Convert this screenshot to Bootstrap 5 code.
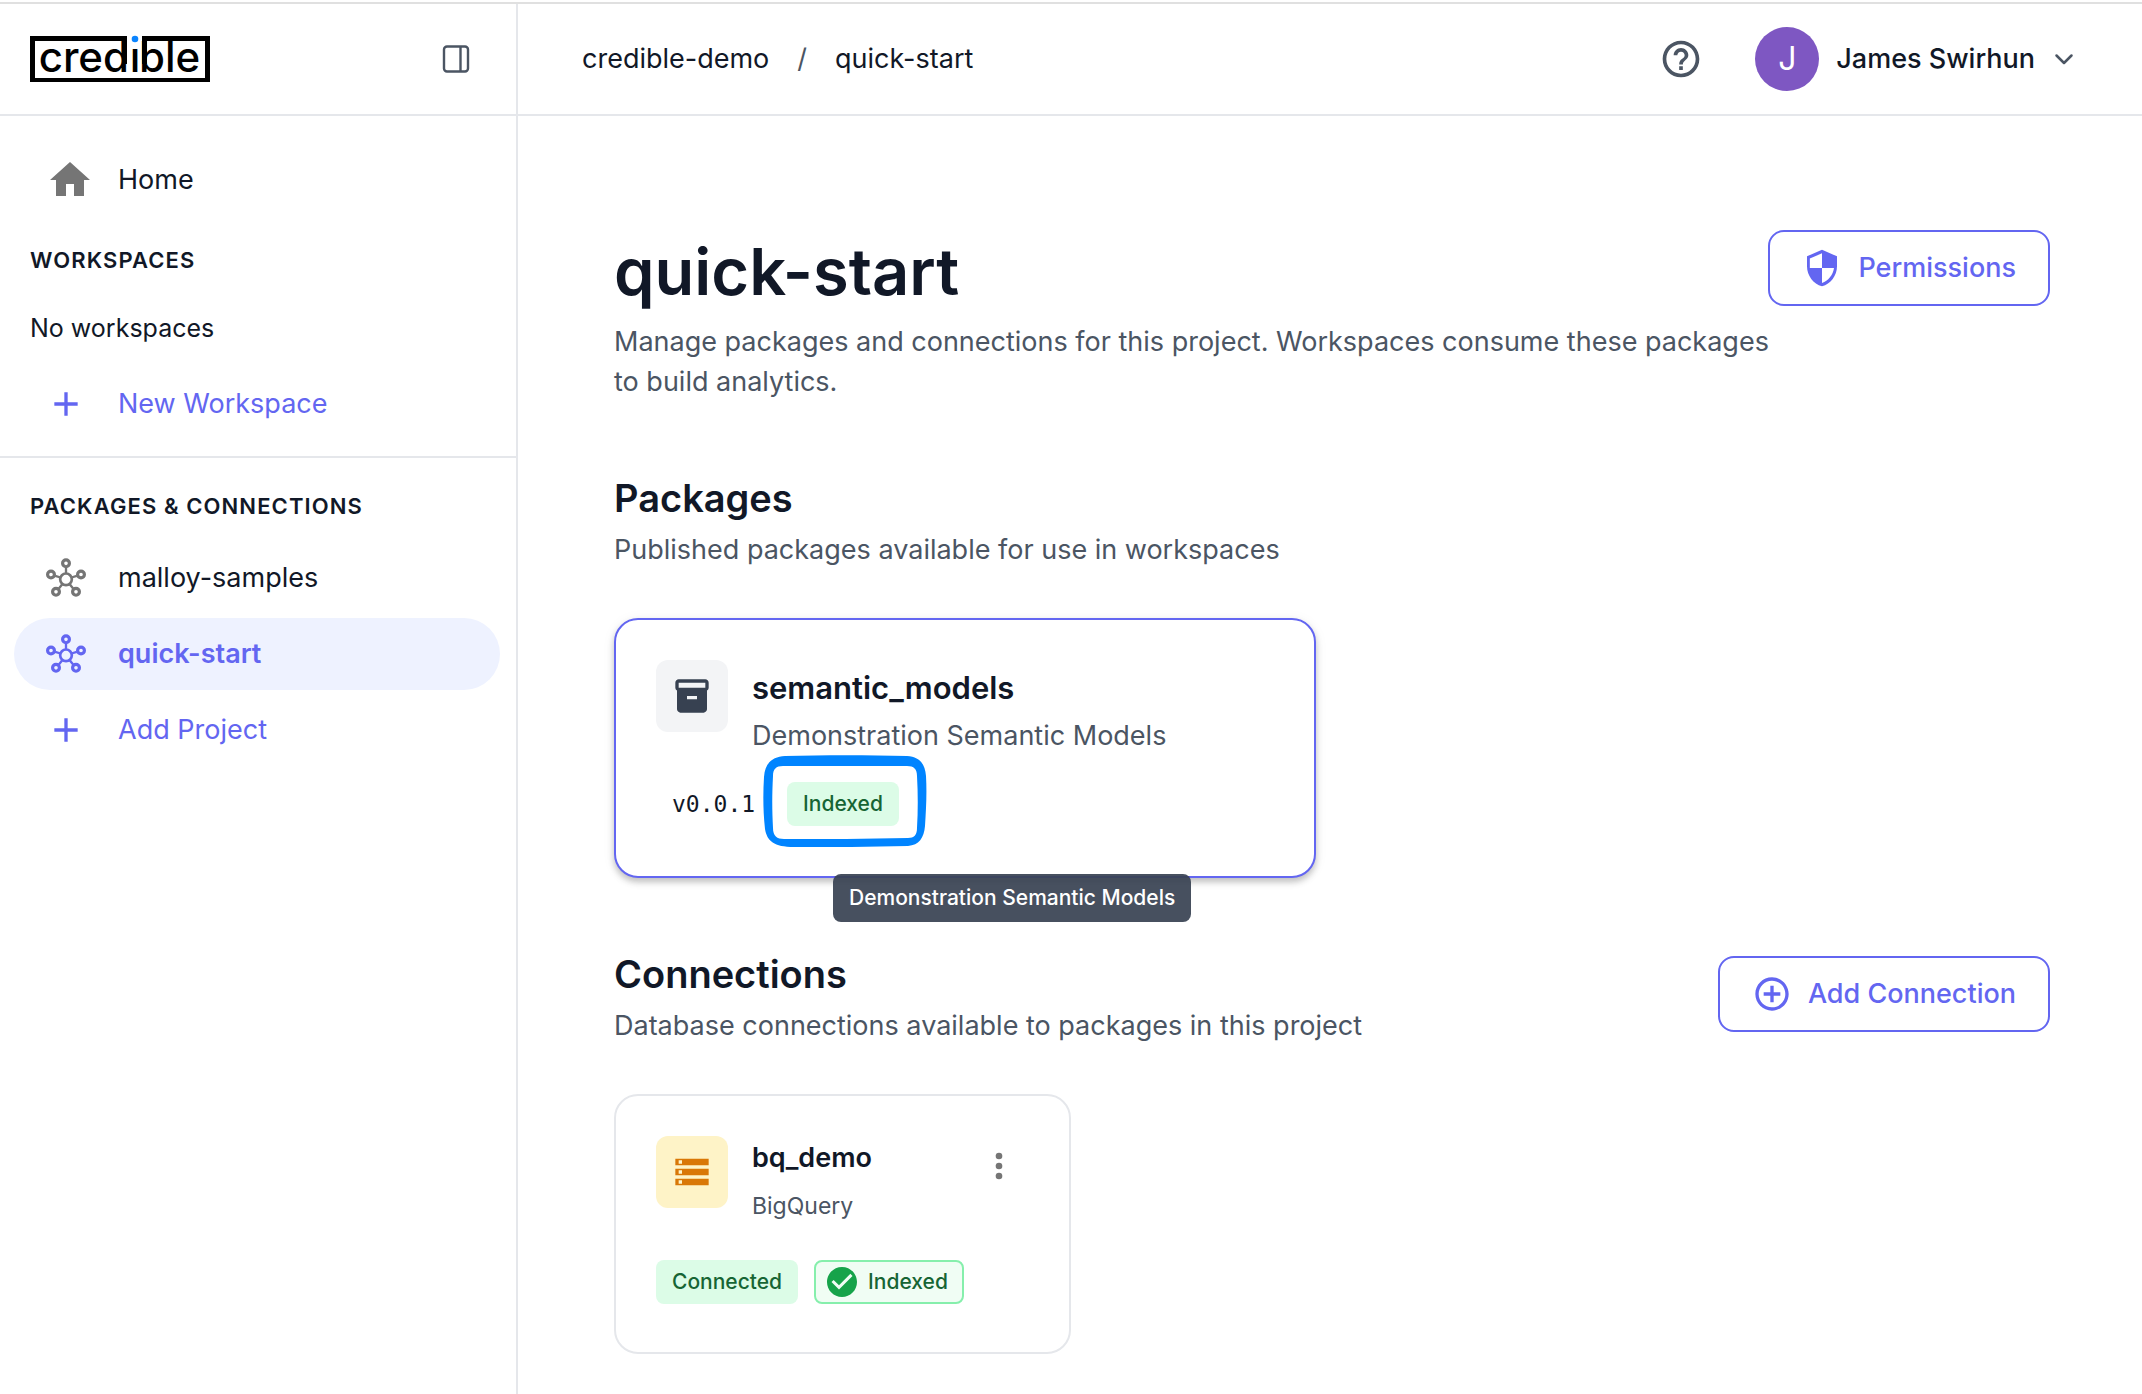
<!DOCTYPE html>
<html lang="en">
<head>
<meta charset="utf-8">
<meta name="viewport" content="width=device-width, initial-scale=1">
<title>quick-start</title>
<link href="https://cdn.jsdelivr.net/npm/bootstrap@5.3.0/dist/css/bootstrap.min.css" rel="stylesheet">
<style>
:root { --ink:#111827; --soft:#4b5563; --brand:#6366f1; --line:#e5e7eb; }
body { font-family: Inter, "Liberation Sans", sans-serif; font-size:27px; line-height:40px; color:var(--ink); background:#fff; }
svg { flex:none; display:block; }
.app-shell { min-height:100vh; padding-top:2px; }
.app-frame { border-top:2px solid #e0e0e0; }
.top-bar { height:112px; border-bottom:2px solid var(--line); }
.side-panel { width:518px; border-right:2px solid var(--line); }
.side-head { padding:0 44px 0 30px; }
.side-nav { padding-top:28px; }
.plain-btn { background:none; border:0; padding:0; color:var(--soft); }
.nav-row { display:flex; align-items:center; height:72px; margin:0 16px 4px 14px; padding-left:32px; gap:32px; border-radius:36px; color:var(--ink); text-decoration:none; }
.nav-row svg { color:#757575; }
.nav-row.home-row { gap:24px; margin-bottom:0; }
.nav-row.accent, .nav-row.accent svg, .nav-row.current, .nav-row.current svg { color:var(--brand); }
.nav-row.current { background:#eef2ff; font-weight:600; }
.side-label { font-size:22px; line-height:32px; font-weight:600; letter-spacing:.05em; margin:0; padding:28px 30px 20px; }
.side-empty { font-size:25px; line-height:64px; margin:0 0 8px; padding:0 30px; }
.side-rule { border-top:2px solid var(--line); margin-top:16px; padding-top:4px; }
.crumb-list { padding-left:64px; gap:28px; }
.crumb-list a { color:inherit; text-decoration:none; }
.crumb-list .slash { color:var(--soft); }
.top-tools { padding-right:66px; gap:52px; }
.avatar-disc { width:64px; height:64px; border-radius:50%; background:#7e57c2; color:#fff; font-size:32px; }
.user-btn { gap:17px; color:var(--ink); font-weight:500; }
.page-body { padding:114px 92px 40px 96px; }
.page-title { font-size:65px; line-height:84px; font-weight:600; margin:0 0 8px; }
.muted-text { color:var(--soft); margin:0; }
.intro-text { max-width:82%; }
.page-section { margin-top:72px; }
.section-title { font-size:38px; line-height:48px; font-weight:600; margin:0 0 8px; }
.btn-line { --bs-btn-color:var(--brand); --bs-btn-border-color:var(--brand); --bs-btn-hover-color:#fff; --bs-btn-hover-bg:var(--brand); --bs-btn-font-size:27px; --bs-btn-line-height:40px; --bs-btn-border-width:2px; --bs-btn-border-radius:16px; --bs-btn-padding-x:32px; --bs-btn-padding-y:16px; --bs-btn-font-weight:500; display:flex; align-items:center; gap:16px; flex:none; }
.low-btn { margin-top:6px; }
.tile-row { --bs-gutter-x:32px; margin-top:48px; }
.tile { --bs-card-border-color:var(--line); --bs-card-border-width:2px; --bs-card-border-radius:24px; --bs-card-color:var(--ink); min-height:260px; padding:40px; }
.tile.hovered { --bs-card-border-color:var(--brand); box-shadow:0 4px 6px rgba(0,0,0,.22), 0 2px 14px rgba(0,0,0,.06); }
.tile-head { gap:24px; height:92px; }
.glyph-box { width:72px; height:72px; border-radius:12px; flex:none; }
.glyph-gray { background:#f3f4f6; color:#374151; }
.glyph-amber { background:#fef3c7; color:#d97706; }
.tile-name { font-size:27px; line-height:40px; font-weight:600; margin:2px 0 8px; }
.tile-name.larger { font-size:31px; margin:8px 0; }
.tile-kind { font-size:23px; }
.chip-row { gap:16px; margin-top:32px; }
.hovered .chip-row { margin-top:30px; }
.chip { display:flex; align-items:center; height:44px; padding:0 16px; border-radius:8px; font-size:21px; line-height:32px; font-weight:500; }
.chip-green { background:#dcfce7; color:#166534; }
.chip-outline { background:#f0fdf4; color:#166534; border:2px solid #86efac; padding:0 14px 0 8px; gap:8px; }
.chip-mono { font-family:"DejaVu Sans Mono", "Liberation Mono", monospace; font-size:23px; font-weight:400; }
.ring-mark { position:absolute; left:-24px; top:-27px; }
.tip-box { position:absolute; left:217px; top:254px; z-index:2; background:rgba(55,65,81,.92); color:#fff; border-radius:8px; padding:8px 16px; font-size:21px; line-height:32px; font-weight:500; white-space:nowrap; }
.dots-btn { color:#757575; margin:10px 10px 0 auto; align-self:flex-start; }
</style>
</head>
<body>
<svg width="0" height="0" class="position-absolute" aria-hidden="true">
  <symbol id="hub" viewBox="0 0 24 24"><g fill="none" stroke="currentColor" stroke-width="1.900"><circle cx="12" cy="12.800" r="3.500" stroke-width="1.600"/><circle cx="12" cy="3.200" r="2.050"/><circle cx="3" cy="9.900" r="2.050"/><circle cx="21" cy="9.900" r="2.050"/><circle cx="6" cy="20.300" r="2.050"/><circle cx="18" cy="20.300" r="2.050"/><path stroke-width="1.400" d="M12 6v3.300M5.500 10.700l3.300 1M18.500 10.700l-3.300 1M7.600 18.500l2.300-2.900M16.400 18.500l-2.300-2.900"/></g></symbol>
  <symbol id="plus" viewBox="0 0 24 24"><path fill="currentColor" d="M19 13h-6v6h-2v-6H5v-2h6V5h2v6h6v2z"/></symbol>
</svg>

<div class="app-shell d-flex">
<div class="app-frame d-flex flex-grow-1">
  <aside class="side-panel flex-shrink-0">
    <div class="top-bar side-head d-flex align-items-center justify-content-between">
      <a href="#" aria-label="credible">
        <svg width="180" height="66" viewBox="0 -10 180 66">
          <path d="M97 28V0H0v46h180V0H112v28h5V5h58v37H5V5h87v23z" fill="#000"/>
          <g font-family="Inter, sans-serif" font-size="42" font-weight="500" fill="#000">
            <text x="99" y="36" text-anchor="end">cred</text>
            <text x="105" y="36" text-anchor="middle">ı</text>
            <text x="109" y="36">ble</text>
          </g>
          <circle cx="105" cy="3" r="3.300" fill="#0a84ff"/>
        </svg>
      </a>
      <button type="button" class="plain-btn" aria-label="Toggle sidebar">
        <svg width="32" height="32" viewBox="0 0 32 32" fill="none" stroke="currentColor" stroke-width="2.400"><rect x="4" y="3.500" width="24" height="25" rx="3"/><path d="M20.500 3v26"/></svg>
      </button>
    </div>
    <nav class="side-nav">
      <a class="nav-row home-row" href="#"><svg width="48" height="48" viewBox="0 0 24 24"><path fill="currentColor" d="M10 20v-6h4v6h5v-8h3L12 3 2 12h3v8z"/></svg>Home</a>
      <h2 class="side-label">WORKSPACES</h2>
      <p class="side-empty">No workspaces</p>
      <a class="nav-row accent" href="#"><svg width="40" height="40"><use href="#plus"/></svg>New Workspace</a>
      <div class="side-rule">
        <h2 class="side-label">PACKAGES &amp; CONNECTIONS</h2>
        <a class="nav-row" href="#"><svg width="40" height="40"><use href="#hub"/></svg>malloy-samples</a>
        <a class="nav-row current" href="#" aria-current="page"><svg width="40" height="40"><use href="#hub"/></svg>quick-start</a>
        <a class="nav-row accent" href="#"><svg width="40" height="40"><use href="#plus"/></svg>Add Project</a>
      </div>
    </nav>
  </aside>

  <div class="flex-grow-1">
    <header class="top-bar d-flex align-items-center justify-content-between">
      <nav class="crumb-list d-flex" aria-label="Breadcrumb">
        <a href="#">credible-demo</a><span class="slash">/</span><a href="#">quick-start</a>
      </nav>
      <div class="top-tools d-flex align-items-center">
        <button type="button" class="plain-btn" aria-label="Help">
          <svg width="44" height="44" viewBox="0 0 24 24"><path fill="currentColor" d="M11 18h2v-2h-2v2zm1-16C6.480 2 2 6.480 2 12s4.480 10 10 10 10-4.480 10-10S17.520 2 12 2zm0 18c-4.410 0-8-3.590-8-8s3.590-8 8-8 8 3.590 8 8-3.590 8-8 8zm0-14c-2.210 0-4 1.790-4 4h2c0-1.100.9-2 2-2s2 .9 2 2c0 2-3 1.750-3 5h2c0-2.250 3-2.500 3-5 0-2.210-1.790-4-4-4z"/></svg>
        </button>
        <button type="button" class="plain-btn user-btn d-flex align-items-center">
          <span class="avatar-disc d-flex align-items-center justify-content-center fw-normal">J</span>
          <span>James Swirhun</span>
          <svg width="24" height="24" viewBox="0 0 24 24" fill="none" stroke="#4b5563" stroke-width="2.500" stroke-linecap="round" stroke-linejoin="round"><path d="M4.500 8.500l7.500 7.500 7.500-7.500"/></svg>
        </button>
      </div>
    </header>

    <main class="page-body">
      <div class="d-flex align-items-start justify-content-between">
        <h1 class="page-title">quick-start</h1>
        <button type="button" class="btn btn-line"><svg width="40" height="40" viewBox="0 0 24 24"><path fill="currentColor" fill-rule="evenodd" d="M12 1L3 5v6c0 5.550 3.840 10.740 9 12 5.160-1.260 9-6.450 9-12V5zM12 3.200V12H4.700V6.300zM12 12h7.200c-.53 4.120-3.480 7.790-7.200 8.940z"/></svg>Permissions</button>
      </div>
      <p class="muted-text intro-text">Manage packages and connections for this project. Workspaces consume these packages to build analytics.</p>

      <section class="page-section">
        <h2 class="section-title">Packages</h2>
        <p class="muted-text">Published packages available for use in workspaces</p>
        <div class="row tile-row">
          <div class="col-6">
            <article class="card tile hovered">
              <div class="tile-head d-flex">
                <span class="glyph-box glyph-gray d-flex align-items-center justify-content-center"><svg width="40" height="40" viewBox="0 0 24 24"><path fill="currentColor" d="M20 2H4c-1 0-2 .9-2 2v3.010c0 .72.43 1.340 1 1.690V20c0 1.100 1.100 2 2 2h14c.9 0 2-.9 2-2V8.700c.57-.35 1-.97 1-1.690V4c0-1.100-1-2-2-2zm-5 12H9v-2h6v2zm5-7H4V4h16v3z"/></svg></span>
                <div>
                  <h3 class="tile-name larger">semantic_models</h3>
                  <p class="muted-text">Demonstration Semantic Models</p>
                </div>
              </div>
              <div class="chip-row d-flex">
                <span class="chip chip-mono">v0.0.1</span>
                <span class="chip chip-green position-relative">Indexed
                  <svg class="ring-mark" width="164" height="92" viewBox="0 0 164 92" aria-hidden="true"><path fill="#0084ff" fill-rule="evenodd" d="M22 1C60 0 106 0 144 1c13 1 18 8 19 20 1 18 0 34-1 50-1 12-6 19-17 20-38 1-76 1-114 1C11 92 4 86 2 74 0 56 0 38 1 22 2 8 9 2 22 1zM20 11c-7 0-10 3-10 10-1 18-1 34 0 52 0 8 4 11 11 11 42 0 82 0 124-1 6 0 9-3 9-10 1-17 1-34 0-52 0-7-3-10-10-10-42 0-82 0-124 0z"/></svg>
                </span>
              </div>
              <div class="tip-box" role="tooltip">Demonstration Semantic Models</div>
            </article>
          </div>
        </div>
      </section>

      <section class="page-section">
        <div class="d-flex align-items-start justify-content-between">
          <div>
            <h2 class="section-title">Connections</h2>
            <p class="muted-text">Database connections available to packages in this project</p>
          </div>
          <button type="button" class="btn btn-line low-btn"><svg width="40" height="40" viewBox="0 0 24 24"><path fill="currentColor" d="M13 7h-2v4H7v2h4v4h2v-4h4v-2h-4V7zm-1-5C6.480 2 2 6.480 2 12s4.480 10 10 10 10-4.480 10-10S17.520 2 12 2zm0 18c-4.410 0-8-3.590-8-8s3.590-8 8-8 8 3.590 8 8-3.590 8-8 8z"/></svg>Add Connection</button>
        </div>
        <div class="row tile-row">
          <div class="col-4">
            <article class="card tile">
              <div class="tile-head d-flex">
                <span class="glyph-box glyph-amber d-flex align-items-center justify-content-center"><svg width="40" height="40" viewBox="0 0 24 24"><path fill="currentColor" d="M2 20h20v-4H2v4zm2-3h2v2H4v-2zM2 4v4h20V4H2zm4 3H4V5h2v2zm-4 7h20v-4H2v4zm2-3h2v2H4v-2z"/></svg></span>
                <div>
                  <h3 class="tile-name">bq_demo</h3>
                  <p class="muted-text tile-kind">BigQuery</p>
                </div>
                <button type="button" class="plain-btn dots-btn" aria-label="More actions"><svg width="40" height="40" viewBox="0 0 24 24" fill="currentColor"><circle cx="12" cy="6" r="2"/><circle cx="12" cy="12" r="2"/><circle cx="12" cy="18" r="2"/></svg></button>
              </div>
              <div class="chip-row d-flex">
                <span class="chip chip-green">Connected</span>
                <span class="chip chip-outline"><svg width="36" height="36" viewBox="0 0 24 24"><path fill="#16a34a" d="M12 2C6.480 2 2 6.480 2 12s4.480 10 10 10 10-4.480 10-10S17.520 2 12 2zm-2 15l-5-5 1.410-1.410L10 14.170l7.590-7.590L19 8l-9 9z"/></svg>Indexed</span>
              </div>
            </article>
          </div>
        </div>
      </section>
    </main>
  </div>
</div>
</div>
<script src="https://cdn.jsdelivr.net/npm/bootstrap@5.3.0/dist/js/bootstrap.bundle.min.js"></script>
</body>
</html>
